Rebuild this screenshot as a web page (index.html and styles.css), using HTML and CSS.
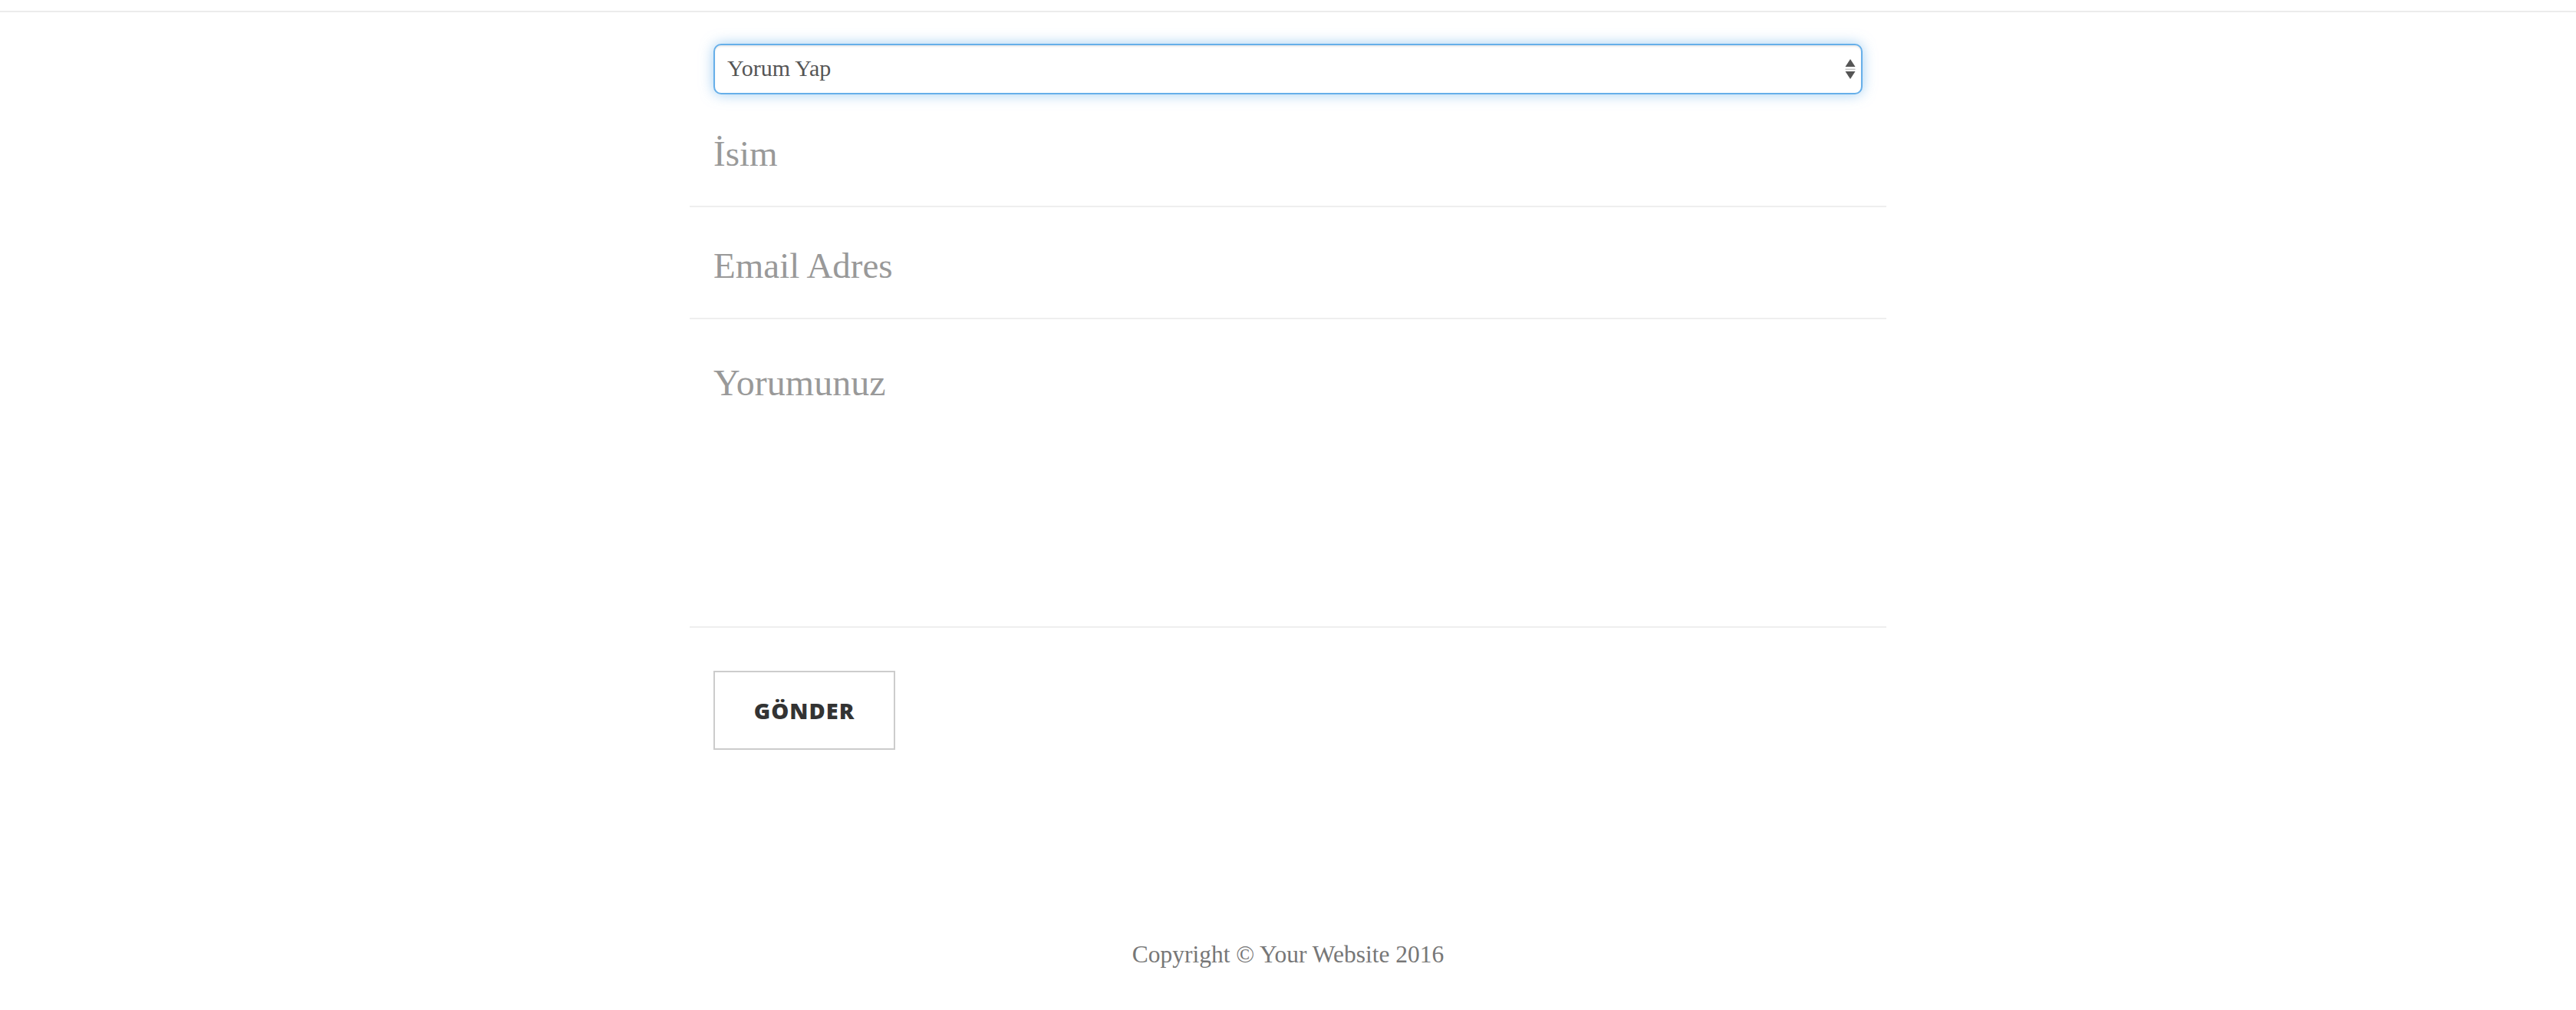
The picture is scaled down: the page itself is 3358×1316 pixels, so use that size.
FILE: index.html
```html
<!DOCTYPE html>
<html lang="tr">
<head>
<meta charset="utf-8">
<title>İletişim</title>
<link rel="stylesheet" href="styles.css">
</head>
<body>
<header class="topbar"></header>
<main class="contact">
  <form class="contact-form">
    <div class="select-wrap">
      <select class="topic">
        <option>Yorum Yap</option>
        <option>Soru Sor</option>
      </select>
      <svg class="select-arrows" width="14" height="27" viewBox="0 0 14 27" aria-hidden="true">
        <polygon points="0.5,10 13.5,10 7,0" fill="#555"/>
        <rect x="0.5" y="12.6" width="13" height="1.4" fill="#c4c4c4"/>
        <polygon points="0.5,16 13.5,16 7,26" fill="#555"/>
      </svg>
    </div>
    <div class="field">
      <input class="field-input" type="text" placeholder="İsim">
    </div>
    <div class="field">
      <input class="field-input" type="email" placeholder="Email Adres">
    </div>
    <div class="field">
      <textarea class="field-area" placeholder="Yorumunuz"></textarea>
    </div>
    <div class="actions">
      <button class="btn-send" type="button">Gönder</button>
    </div>
  </form>
</main>
<footer class="site-footer">
  <p class="copyright">Copyright © Your Website 2016</p>
</footer>
</body>
</html>
```
FILE: styles.css
```css
html, body {
  margin: 0;
  padding: 0;
  background: #fff;
}
body {
  font-family: "Liberation Serif", "Times New Roman", serif;
  color: #404040;
}
.topbar {
  height: 14px;
  border-bottom: 2px solid #ececec;
}
.contact {
  width: 1560px;
  margin: 0 auto;
}
.contact-form {
  display: flex;
  flex-direction: column;
}
.select-wrap {
  position: relative;
  margin: 41px 31px 1px 31px;
  height: 66px;
}
.topic {
  -webkit-appearance: none;
  appearance: none;
  display: block;
  box-sizing: border-box;
  width: 100%;
  height: 66px;
  margin: 0;
  padding: 0 40px 3px 16px;
  border: 2px solid #66afe9;
  border-radius: 10px;
  background: #fff;
  color: #555;
  font-family: "Liberation Serif", "Times New Roman", serif;
  font-size: 30px;
  outline: none;
  box-shadow: inset 0 2px 2px rgba(0,0,0,0.075), 0 0 17px rgba(102,175,233,0.6);
}
.select-arrows {
  position: absolute;
  right: 9px;
  top: 20px;
  pointer-events: none;
}
.field {
  padding: 46px 31px 38px 31px;
  border-bottom: 2px solid #eeeeee;
}
.field-input {
  display: block;
  box-sizing: border-box;
  width: 100%;
  height: 60px;
  margin: 0;
  padding: 0;
  border: none;
  outline: none;
  background: transparent;
  font-family: "Liberation Serif", "Times New Roman", serif;
  font-size: 47px;
  color: #404040;
}
.field-area {
  display: block;
  box-sizing: border-box;
  width: 100%;
  height: 316px;
  margin: 0;
  padding: 9px 0 0 0;
  border: none;
  outline: none;
  resize: none;
  background: transparent;
  font-family: "Liberation Serif", "Times New Roman", serif;
  font-size: 48px;
  line-height: 1.15;
  color: #404040;
}
.field-input::placeholder,
.field-area::placeholder {
  color: #999;
  opacity: 1;
}
.actions {
  padding: 56px 31px 0 31px;
}
.btn-send {
  display: flex;
  align-items: center;
  justify-content: center;
  box-sizing: border-box;
  width: 237px;
  height: 103px;
  margin: 0;
  padding: 0;
  border: 2px solid #ccc;
  border-radius: 0;
  background: #fff;
  color: #333;
  font-family: "Open Sans", "Liberation Sans", sans-serif;
  font-size: 29px;
  font-weight: 800;
  letter-spacing: 1px;
  text-transform: uppercase;
  cursor: pointer;
}
.site-footer {
  margin-top: 245px;
}
.copyright {
  margin: 0;
  text-align: center;
  font-family: "Liberation Serif", "Times New Roman", serif;
  font-size: 31.5px;
  line-height: 44px;
  color: #777;
}
```
